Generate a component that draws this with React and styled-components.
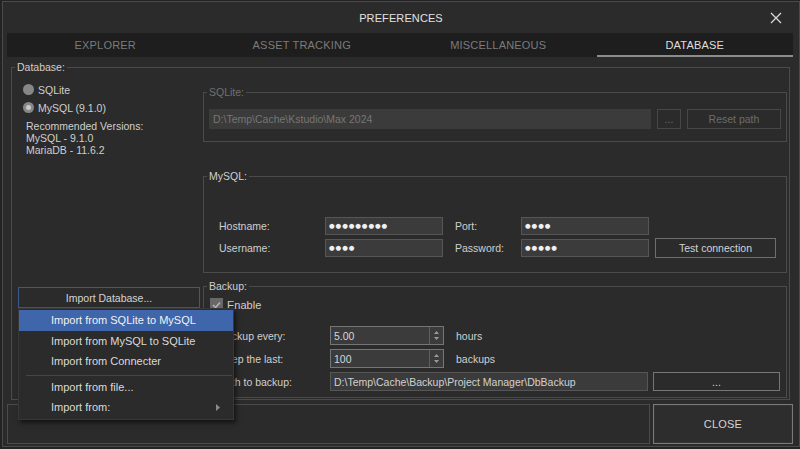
import React from 'react';
import styled, { createGlobalStyle } from 'styled-components';

const GlobalStyle = createGlobalStyle`
  html, body {
    margin: 0;
    padding: 0;
    background: #232323;
    overflow: hidden;
  }
  body {
    font-family: "Liberation Sans", Arial, sans-serif;
  }
  * { box-sizing: border-box; }
`;

const Window = styled.div`
  position: relative;
  width: 798px;
  height: 446px;
  margin: 1px 0 0 2px;
  border: 1px solid #4a4a4a;
  background: #2b2b2b;
  display: flex;
  flex-direction: column;
  color: #cfcfcf;
  font-size: 10.5px;
`;

const TitleBar = styled.div`
  height: 31px;
  display: grid;
  grid-template-columns: 1fr auto 1fr;
  align-items: center;
`;

const Title = styled.div`
  grid-column: 2;
  font-size: 11px;
  color: #e2e2e2;
  letter-spacing: 0.1px;
`;

const CloseIcon = styled.svg`
  justify-self: end;
  margin-right: 17px;
  width: 12px;
  height: 12px;
`;

const TabBar = styled.div`
  display: flex;
  height: 24px;
  margin: 0 6px 0 4px;
  background: #1e1e1e;
`;

const Tab = styled.div`
  flex: 1;
  display: flex;
  align-items: center;
  justify-content: center;
  padding-top: 2px;
  font-size: 11px;
  letter-spacing: 0.2px;
  color: ${p => (p.$active ? '#dedede' : '#7b7b7b')};
  border-bottom: 2px solid ${p => (p.$active ? '#8c8c8c' : 'transparent')};
`;

const GroupBox = styled.fieldset`
  margin: 0;
  padding: 0;
  min-width: 0;
  border: 1px solid #4b4b4b;
`;

const Caption = styled.legend`
  margin-left: 3px;
  padding: 0 2px;
  line-height: 12px;
  font-size: 10.5px;
  color: ${p => (p.$disabled ? '#717171' : '#cfcfcf')};
`;

const DatabaseGroup = styled(GroupBox)`
  margin: 4px 9px 0 8px;
  height: 339px;
`;

const Columns = styled.div`
  display: grid;
  grid-template-columns: 191px 584px;
`;

const LeftCol = styled.div`
  display: flex;
  flex-direction: column;
`;

const RadioRow = styled.div`
  display: flex;
  align-items: center;
  gap: 4px;
  height: 17px;
  margin: ${p => p.$mt || 0}px 0 0 11px;
`;

const RadioDot = styled.span`
  width: 11px;
  height: 11px;
  border-radius: 50%;
  background: #878787;
  display: flex;
  align-items: center;
  justify-content: center;
  &::after {
    content: '';
    width: 5px;
    height: 5px;
    border-radius: 50%;
    background: ${p => (p.$checked ? '#c9c9c9' : 'transparent')};
  }
`;

const Notes = styled.div`
  margin: 4px 0 0 14px;
  line-height: 12px;
`;

const ImportWrap = styled.div`
  position: relative;
  margin: 131px 0 0 6px;
  width: 182px;
  z-index: 2;
`;

const Button = styled.button`
  height: ${p => p.$h || 20}px;
  width: ${p => (p.$w ? `${p.$w}px` : '100%')};
  padding: 0;
  background: transparent;
  border: 1px solid ${p => p.$border || (p.disabled ? '#474747' : '#6e6e6e')};
  color: ${p => (p.disabled ? '#6c6c6c' : '#d4d4d4')};
  font-family: inherit;
  font-size: 10.5px;
  cursor: default;
`;

const Menu = styled.div`
  position: absolute;
  top: 100%;
  left: 0;
  width: 216px;
  padding: 1px 0;
  background: #2b2b2b;
  border: 1px solid #383838;
  box-shadow: 2px 3px 4px rgba(0, 0, 0, 0.55);
  font-size: 11px;
`;

const MenuItem = styled.div`
  height: 20.5px;
  display: flex;
  align-items: center;
  justify-content: space-between;
  padding: 0 13px 0 32px;
  color: ${p => (p.$highlight ? '#f2f2f2' : '#dadada')};
  background: ${p => (p.$highlight ? '#3f66ab' : 'transparent')};
`;

const MenuSeparator = styled.div`
  height: 1px;
  margin: 3px 1px 1px 7px;
  background: #454545;
`;

const RightCol = styled.div`
  display: flex;
  flex-direction: column;
`;

const SqliteGroup = styled(GroupBox)`
  margin-top: 13px;
`;

const PathRow = styled.div`
  display: flex;
  gap: 6px;
  padding: 11px 5px 12px;
`;

const TextBox = styled.div`
  height: ${p => p.$h || 18}px;
  width: ${p => p.$w}px;
  display: flex;
  align-items: center;
  padding-left: 3px;
  background: #3b3b3b;
  border: 1px solid ${p => p.$border || '#565656'};
  color: ${p => (p.$dim ? '#767676' : '#d2d2d2')};
  white-space: nowrap;
  overflow: hidden;
`;

const Dots = styled.span`
  font-family: "DejaVu Sans", sans-serif;
  font-size: 6.5px;
  letter-spacing: 0.9px;
  color: #f0f0f0;
`;

const MysqlGroup = styled(GroupBox)`
  margin-top: 28px;
`;

const MysqlGrid = styled.div`
  display: grid;
  grid-template-columns: 106px 118px 78px 128px 127px;
  grid-template-rows: 18px 18px;
  row-gap: 4px;
  align-items: center;
  padding: 35px 0 15px 15px;
`;

const FieldLabel = styled.span`
  padding-left: ${p => p.$pl || 0}px;
  white-space: nowrap;
`;

const TestButton = styled(Button)`
  justify-self: end;
`;

const BackupGroup = styled(GroupBox)`
  margin-top: 7px;
`;

const BackupBody = styled.div`
  display: flex;
  flex-direction: column;
  gap: 4px;
  padding: 6px 0 6px 6px;
`;

const CheckRow = styled.div`
  display: flex;
  align-items: center;
  gap: 4px;
  height: 13px;
  margin-bottom: 11px;
  font-size: 11px;
`;

const CheckBox = styled.span`
  width: 13px;
  height: 13px;
  background: #686868;
  display: flex;
  align-items: center;
  justify-content: center;
`;

const FormRow = styled.div`
  display: flex;
  align-items: center;
  height: 19px;
  padding-left: 9px;
`;

const RowLabel = styled.span`
  width: 111px;
  white-space: nowrap;
`;

const SpinBox = styled.div`
  width: 114px;
  height: 19px;
  display: flex;
  background: #3b3b3b;
  border: 1px solid #757575;
`;

const SpinValue = styled.span`
  flex: 1;
  display: flex;
  align-items: center;
  padding-left: 3px;
  color: #d6d6d6;
`;

const SpinArrows = styled.span`
  width: 14px;
  display: flex;
  flex-direction: column;
  align-items: center;
  justify-content: center;
  gap: 3px;
  border-left: 1px solid #5e5e5e;
`;

const Unit = styled.span`
  margin-left: 12px;
`;

const BrowseButton = styled(Button)`
  margin-left: 5px;
`;

const Footer = styled.div`
  display: flex;
  gap: 3px;
  height: 40px;
  margin: 4px 6px 0 4px;
`;

const FooterPanel = styled.div`
  flex: 1;
  border: 1px solid #4b4b4b;
`;

const CloseButton = styled.button`
  width: 140px;
  height: 40px;
  padding: 0;
  background: #2d2d2d;
  border: 1px solid #7a7a7a;
  box-shadow: inset 0 0 0 1px #333;
  color: #d4d4d4;
  font-family: inherit;
  font-size: 11px;
  letter-spacing: 0.2px;
`;

const Triangle = ({ up }) => (
  <svg width="5" height="3" viewBox="0 0 5 3">
    <path d={up ? 'M0 3 L2.5 0 L5 3 Z' : 'M0 0 L2.5 3 L5 0 Z'} fill="#9a9a9a" />
  </svg>
);

const tabs = ['EXPLORER', 'ASSET TRACKING', 'MISCELLANEOUS', 'DATABASE'];

export default function App() {
  return (
    <>
      <GlobalStyle />
      <Window>
        <TitleBar>
          <Title>PREFERENCES</Title>
          <CloseIcon viewBox="0 0 12 12">
            <path d="M1 1 L11 11 M11 1 L1 11" stroke="#d8d8d8" strokeWidth="1.3" />
          </CloseIcon>
        </TitleBar>

        <TabBar>
          {tabs.map(t => (
            <Tab key={t} $active={t === 'DATABASE'}>{t}</Tab>
          ))}
        </TabBar>

        <DatabaseGroup>
          <Caption>Database:</Caption>
          <Columns>
            <LeftCol>
              <RadioRow $mt={8}>
                <RadioDot />
                SQLite
              </RadioRow>
              <RadioRow $mt={1}>
                <RadioDot $checked />
                MySQL (9.1.0)
              </RadioRow>
              <Notes>
                Recommended Versions:<br />
                MySQL - 9.1.0<br />
                MariaDB - 11.6.2
              </Notes>
              <ImportWrap>
                <Button $h={21} $border="#3a5889">Import Database...</Button>
                <Menu>
                  <MenuItem $highlight>Import from SQLite to MySQL</MenuItem>
                  <MenuItem>Import from MySQL to SQLite</MenuItem>
                  <MenuItem>Import from Connecter</MenuItem>
                  <MenuSeparator />
                  <MenuItem>Import from file...</MenuItem>
                  <MenuItem>
                    Import from:
                    <svg width="4" height="7" viewBox="0 0 4 7">
                      <path d="M0 0 L4 3.5 L0 7 Z" fill="#8a8a8a" />
                    </svg>
                  </MenuItem>
                </Menu>
              </ImportWrap>
            </LeftCol>

            <RightCol>
              <SqliteGroup>
                <Caption $disabled>SQLite:</Caption>
                <PathRow>
                  <TextBox $w={442} $h={20} $border="#3b3b3b" $dim>
                    D:\Temp\Cache\Kstudio\Max 2024
                  </TextBox>
                  <Button $w={24} disabled>...</Button>
                  <Button $w={94} disabled>Reset path</Button>
                </PathRow>
              </SqliteGroup>

              <MysqlGroup>
                <Caption>MySQL:</Caption>
                <MysqlGrid>
                  <FieldLabel>Hostname:</FieldLabel>
                  <TextBox $w={118}><Dots>●●●●●●●●●</Dots></TextBox>
                  <FieldLabel $pl={12}>Port:</FieldLabel>
                  <TextBox $w={128}><Dots>●●●●</Dots></TextBox>
                  <span />
                  <FieldLabel>Username:</FieldLabel>
                  <TextBox $w={118}><Dots>●●●●</Dots></TextBox>
                  <FieldLabel $pl={12}>Password:</FieldLabel>
                  <TextBox $w={128}><Dots>●●●●●</Dots></TextBox>
                  <TestButton $w={121}>Test connection</TestButton>
                </MysqlGrid>
              </MysqlGroup>

              <BackupGroup>
                <Caption>Backup:</Caption>
                <BackupBody>
                  <CheckRow>
                    <CheckBox>
                      <svg width="9" height="8" viewBox="0 0 9 8">
                        <path d="M1 4 L3.5 6.5 L8 1.5" stroke="#b4b4b4" strokeWidth="1.6" fill="none" />
                      </svg>
                    </CheckBox>
                    Enable
                  </CheckRow>
                  <FormRow>
                    <RowLabel>Backup every:</RowLabel>
                    <SpinBox>
                      <SpinValue>5.00</SpinValue>
                      <SpinArrows><Triangle up /><Triangle /></SpinArrows>
                    </SpinBox>
                    <Unit>hours</Unit>
                  </FormRow>
                  <FormRow>
                    <RowLabel>Keep the last:</RowLabel>
                    <SpinBox>
                      <SpinValue>100</SpinValue>
                      <SpinArrows><Triangle up /><Triangle /></SpinArrows>
                    </SpinBox>
                    <Unit>backups</Unit>
                  </FormRow>
                  <FormRow>
                    <RowLabel>Path to backup:</RowLabel>
                    <TextBox $w={318} $h={19}>
                      D:\Temp\Cache\Backup\Project Manager\DbBackup
                    </TextBox>
                    <BrowseButton $w={127} $h={19} $border="#767676">...</BrowseButton>
                  </FormRow>
                </BackupBody>
              </BackupGroup>
            </RightCol>
          </Columns>
        </DatabaseGroup>

        <Footer>
          <FooterPanel />
          <CloseButton>CLOSE</CloseButton>
        </Footer>
      </Window>
    </>
  );
}
